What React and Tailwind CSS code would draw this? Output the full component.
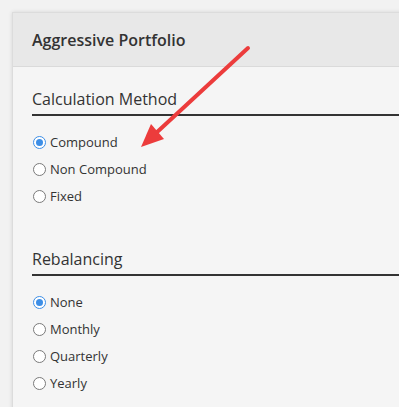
import React from "react";

function Radio({ label, checked }) {
  return (
    <div className="flex items-center h-[27px]">
      {checked ? (
        <span className="w-[13px] h-[13px] rounded-full border border-[#3d8ee6] flex items-center justify-center ml-[1px] bg-white">
          <span className="w-[7px] h-[7px] rounded-full bg-[#3d8ee6]" />
        </span>
      ) : (
        <span className="w-[13px] h-[13px] rounded-full border border-[#7a7a7a] bg-white ml-[1px]" />
      )}
      <span className="ml-[4px] text-[13px] text-[#333] leading-none">{label}</span>
    </div>
  );
}

function Section({ title, items, top }) {
  return (
    <div className={top}>
      <div className="text-[16px] leading-[25px] text-[#333] pb-[2px] border-b-2 border-[#333] mr-[-40px]">{title}</div>
      <div className="mt-[13px]">
        {items.map((it, i) => (
          <Radio key={it} label={it} checked={i === 0} />
        ))}
      </div>
    </div>
  );
}

export default function App() {
  return (
    <div
      className="relative h-[407px] w-[399px] overflow-hidden bg-[#f2f2f2] pt-[12px] pl-[12px]"
      style={{ fontFamily: '"Open Sans", "Noto Sans", sans-serif' }}
    >
      <div className="w-[420px] h-[420px] bg-[#f5f5f5] border-l border-t border-[#dcdcdc] shadow-[0_0_4px_rgba(0,0,0,0.12)]">
        <div className="h-[54px] bg-[#e8e8e8] border-b border-[#dadada] flex items-center px-[19px]">
          <span className="text-[16px] font-semibold text-[#333]">Aggressive Portfolio</span>
        </div>
        <div className="px-[19px]">
          <Section top="pt-[20px]" title="Calculation Method" items={["Compound", "Non Compound", "Fixed"]} />
          <Section top="pt-[37px]" title="Rebalancing" items={["None", "Monthly", "Quarterly", "Yearly"]} />
        </div>
      </div>
      <svg className="absolute left-0 top-0 pointer-events-none" width="399" height="407">
        <line x1="248" y1="48" x2="155" y2="134" stroke="#ec3c3c" strokeWidth="4" strokeLinecap="round" />
        <polygon points="141,147 151,124 164,139" fill="#ec3c3c" />
      </svg>
    </div>
  );
}
